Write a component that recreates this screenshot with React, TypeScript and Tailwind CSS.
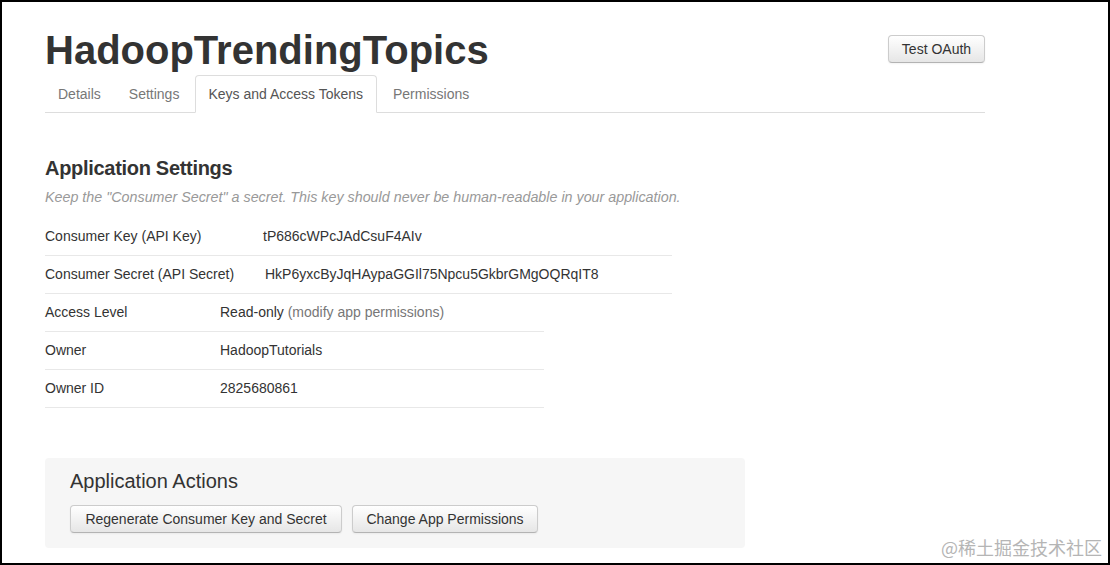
import React from 'react';

const tabs = ['Details', 'Settings', 'Keys and Access Tokens', 'Permissions'];

function Button({ children, className = '' }: { children: React.ReactNode; className?: string }) {
  return (
    <button
      className={`h-[28px] px-[12px] text-[14px] text-[#333] bg-gradient-to-b from-white to-[#e6e6e6] border border-[#ccc] border-b-[#b3b3b3] rounded-[4px] shadow-[inset_0_1px_0_rgba(255,255,255,0.2),0_1px_2px_rgba(0,0,0,0.05)] ${className}`}
    >
      {children}
    </button>
  );
}

export default function App() {
  const keys = [
    ['Consumer Key (API Key)', 'tP686cWPcJAdCsuF4AIv'],
    ['Consumer Secret (API Secret)', 'HkP6yxcByJqHAypaGGIl75Npcu5GkbrGMgOQRqIT8'],
  ];
  const info = [
    ['Owner', 'HadoopTutorials'],
    ['Owner ID', '2825680861'],
  ];

  return (
    <div
      className="relative w-[1110px] h-[565px] border-2 border-black bg-white overflow-hidden"
      style={{ fontFamily: '"Liberation Sans", Arial, sans-serif' }}
    >
      <div className="w-[940px] ml-[43px]">
        {/* header */}
        <div className="flex justify-between items-start pt-[26px]">
          <h1 className="text-[40px] leading-[44px] font-bold text-[#333]">HadoopTrendingTopics</h1>
          <Button className="mt-[7px] w-[97px] px-0">Test OAuth</Button>
        </div>

        {/* tabs */}
        <div className="flex mt-[3px] border-b border-[#ddd] h-[38px]">
          {tabs.map((t, i) =>
            i === 2 ? (
              <div
                key={t}
                className="mr-[3px] pl-[12px] pr-[13px] h-[38px] pt-px flex items-center text-[14px] text-[#555] bg-white border border-[#ddd] border-b-white rounded-t-[4px]"
              >
                {t}
              </div>
            ) : (
              <div
                key={t}
                className={`${i === 1 ? 'mr-[3px]' : 'mr-[2px]'} px-[13px] h-[38px] pt-px flex items-center text-[14px] text-[#777]`}
              >
                {t}
              </div>
            )
          )}
        </div>

        {/* settings */}
        <h2 className="mt-[43px] text-[20px] leading-[24px] font-bold tracking-[-0.3px] text-[#333]">
          Application Settings
        </h2>
        <p className="mt-[7px] text-[14.3px] leading-[20px] italic text-[#999]">
          Keep the "Consumer Secret" a secret. This key should never be human-readable in your application.
        </p>

        <div className="mt-[11px] w-[627px] text-[14px] text-[#333]">
          {keys.map(([k, v], i) => (
            <div key={k} className="flex h-[38px] items-center border-b border-[#e8e8e8]">
              <div className={i === 0 ? 'w-[218px]' : 'w-[220px]'}>{k}</div>
              <div>{v}</div>
            </div>
          ))}
        </div>
        <div className="w-[499px] text-[14px] text-[#333]">
          <div className="flex h-[38px] items-center border-b border-[#e8e8e8]">
            <div className="w-[175px]">Access Level</div>
            <div>
              Read-only <span className="text-[#777]">(modify app permissions)</span>
            </div>
          </div>
          {info.map(([k, v]) => (
            <div key={k} className="flex h-[38px] items-center border-b border-[#e8e8e8]">
              <div className="w-[175px]">{k}</div>
              <div>{v}</div>
            </div>
          ))}
        </div>

        {/* actions */}
        <div className="mt-[50px] w-[700px] bg-[#f6f6f6] rounded-[4px] pl-[25px] pt-[10px] pb-[15px]">
          <h3 className="text-[20px] leading-[26px] text-[#333]">Application Actions</h3>
          <div className="flex gap-[10px] mt-[11px]">
            <Button className="w-[272px] px-0">Regenerate Consumer Key and Secret</Button>
            <Button className="w-[186px] px-0">Change App Permissions</Button>
          </div>
        </div>
      </div>

      <div
        className="absolute right-[6px] bottom-[4px] text-[18px] leading-[24px] text-[#b5b5b5]"
        style={{ fontFamily: '"Noto Sans CJK SC", "Liberation Sans", sans-serif' }}
      >
        @稀土掘金技术社区
      </div>
    </div>
  );
}
